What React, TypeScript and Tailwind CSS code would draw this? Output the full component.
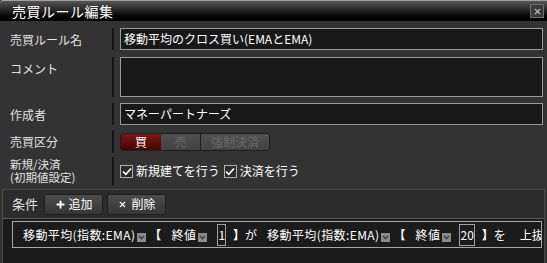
import { Plus, X } from "lucide-react";

const font = { fontFamily: '"Noto Sans CJK JP", "Noto Sans", sans-serif' };

const DropIcon = () => (
  <span className="inline-flex w-[9px] h-[9px] bg-[#8a8a8a] items-center justify-center shrink-0">
    <svg width="7" height="5" viewBox="0 0 7 5">
      <path d="M1 1 L3.5 3.5 L6 1" stroke="#3a3a3a" strokeWidth="1.3" fill="none" />
    </svg>
  </span>
);

const Check = () => (
  <span className="inline-flex w-[13px] h-[13px] border border-[#b0b0b0] bg-[#2c2c2c] items-center justify-center shrink-0">
    <svg width="10" height="9" viewBox="0 0 10 9">
      <path d="M1 4.5 L3.8 7.3 L9 1.5" stroke="#ffffff" strokeWidth="1.6" fill="none" />
    </svg>
  </span>
);

const Row = ({ label, h, mt, children }: { label: React.ReactNode; h: string; mt: string; children: React.ReactNode }) => (
  <div className={`flex ${h} ${mt}`}>
    <div className="w-[114px] shrink-0 pl-[10px] flex items-center text-[12px] leading-[13px] text-[#e2e2e2] border-r-2 border-[#151515]">
      {label}
    </div>
    <div className="flex-1 pl-[6px] pr-[4px] flex items-center">{children}</div>
  </div>
);

export default function App() {
  return (
    <div className="w-[547px] h-[263px] overflow-hidden bg-[#333333] flex flex-col" style={font}>
      {/* title bar */}
      <div className="h-[21px] shrink-0 flex items-center justify-between border-t border-[#a0a0a0] rounded-tl-[3px] bg-gradient-to-b from-[#555555] via-[#222222] to-[#000000] pl-[12px] pr-[3px]">
        <span className="text-white text-[14px] leading-none tracking-[0.5px]">売買ルール編集</span>
        <span className="w-[14px] h-[14px] border border-[#6f6f6f] bg-[#3a3a3a] flex items-center justify-center">
          <X size={9} strokeWidth={3} color="#bdbdbd" />
        </span>
      </div>

      <Row label="売買ルール名" h="h-[22px]" mt="mt-[7px]">
        <div className="w-full h-[22px] border border-[#9a9a9a] bg-[#181818] text-white text-[12px] flex items-center pl-[3px]">
          移動平均のクロス買い(EMAとEMA)
        </div>
      </Row>

      <Row label={<span className="self-start pt-[5px]">コメント</span>} h="h-[40px]" mt="mt-[7px]">
        <div className="w-full h-[40px] border border-[#9a9a9a] bg-[#181818]" />
      </Row>

      <Row label="作成者" h="h-[22px]" mt="mt-[6px]">
        <div className="w-full h-[22px] border border-[#9a9a9a] bg-[#181818] text-white text-[12px] flex items-center pl-[3px]">
          マネーパートナーズ
        </div>
      </Row>

      <Row label="売買区分" h="h-[23px]" mt="mt-[5px]">
        <div className="flex h-[18px] rounded-[3px] border border-[#1e1e1e] overflow-hidden text-[12px] leading-none">
          <span className="w-[40px] flex items-center justify-center text-white bg-gradient-to-b from-[#7d1616] to-[#420606]">買</span>
          <span className="w-[40px] flex items-center justify-center text-[#6a6a6a] bg-gradient-to-b from-[#505050] to-[#424242] border-r border-[#1e1e1e]">売</span>
          <span className="w-[68px] flex items-center justify-center text-[#6a6a6a] bg-gradient-to-b from-[#505050] to-[#424242]">強制決済</span>
        </div>
      </Row>

      <Row label={<span className="flex flex-col text-[11.5px] leading-[13px]"><span>新規/決済</span><span>(初期値設定)</span></span>} h="h-[28px]" mt="mt-[4px]">
        <div className="flex items-center text-[12px] text-white">
          <Check />
          <span className="ml-[3px]">新規建てを行う</span>
          <span className="ml-[4px]"><Check /></span>
          <span className="ml-[3px]">決済を行う</span>
        </div>
      </Row>

      {/* conditions */}
      <div className="mt-[4px] mx-[2px] flex-1 flex flex-col border-t border-l border-r border-[#4a4a4a] bg-[#2c2c2c]">
        <div className="h-[28px] shrink-0 flex items-center pl-[9px] gap-[4px]">
          <span className="text-[13px] text-[#e2e2e2] mr-[2px]">条件</span>
          <span className="w-[59px] h-[21px] flex items-center justify-center gap-[3px] text-white text-[12px] rounded-[2px] border border-[#1e1e1e] bg-gradient-to-b from-[#4c4c4c] to-[#363636]">
            <Plus size={11} strokeWidth={4} color="#ffffff" />
            追加
          </span>
          <span className="w-[59px] h-[21px] flex items-center justify-center gap-[5px] text-white text-[12px] rounded-[2px] border border-[#1e1e1e] bg-gradient-to-b from-[#4c4c4c] to-[#363636]">
            <X size={9} strokeWidth={3} color="#ffffff" />
            削除
          </span>
        </div>
        <div className="flex-1 border-t border-[#5a5a5a] bg-[#1b1b1b] pt-[2px] pl-[9px] pr-[2px]">
          <div className="h-[27px] border border-[#a8a8a8] flex items-center whitespace-nowrap overflow-hidden text-[12px] text-white pl-[10px]">
            <span className="tracking-[0.4px]">移動平均(指数:EMA)</span>
            <span className="ml-[2px]"><DropIcon /></span>
            <span className="ml-[3px] font-bold">【</span>
            <span className="ml-[10px] tracking-[0.5px]">終値</span>
            <span className="ml-[2px]"><DropIcon /></span>
            <span className="ml-[10px] w-[14px] h-[22px] border border-[#a0a0a0] flex items-center justify-center">1</span>
            <span className="ml-[7px] font-bold">】</span>
            <span>が</span>
            <span className="ml-[10px] tracking-[0.4px]">移動平均(指数:EMA)</span>
            <span className="ml-[2px]"><DropIcon /></span>
            <span className="ml-[3px] font-bold">【</span>
            <span className="ml-[10px] tracking-[0.5px]">終値</span>
            <span className="ml-[2px]"><DropIcon /></span>
            <span className="ml-[8px] w-[20px] h-[22px] border border-[#a0a0a0] flex items-center justify-center">20</span>
            <span className="ml-[7px] font-bold">】</span>
            <span>を</span>
            <span className="ml-[14px]">上抜</span>
          </div>
        </div>
      </div>
    </div>
  );
}
